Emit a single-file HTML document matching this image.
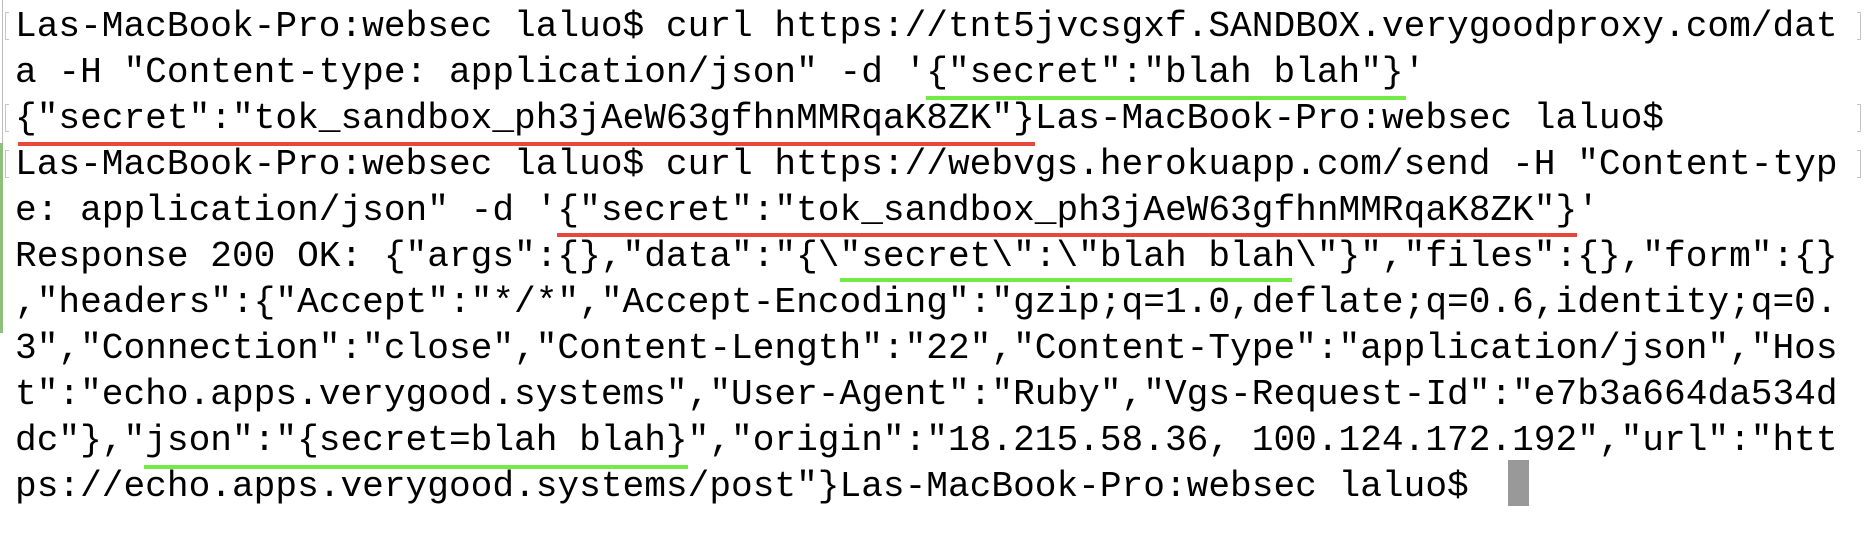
<!DOCTYPE html>
<html><head><meta charset="utf-8"><style>
html,body{margin:0;padding:0;background:#fff;width:1866px;height:534px;overflow:hidden;position:relative}
.l{position:absolute;left:15px;white-space:pre;font-family:"Liberation Mono",monospace;font-size:36.17px;line-height:46px;height:46px;color:#000}
.u{position:absolute;height:4px}
.g{background:#74ea47}.r{background:#e8473c}
.b{position:absolute;width:3px;height:26px;border:1.5px solid #c4c4c4}
.bl{border-right:none}.br{border-left:none}
</style></head><body>
<div style="position:absolute;left:2px;top:0;width:1px;height:143px;background:#bbb"></div>
<div style="position:absolute;left:0;top:143px;width:3px;height:190px;background:#8fbf7a"></div>
<div class="l" style="top:4px">Las-MacBook-Pro:websec laluo$ curl https://tnt5jvcsgxf.SANDBOX.verygoodproxy.com/dat</div>
<div class="l" style="top:50px">a -H "Content-type: application/json" -d '{"secret":"blah blah"}'</div>
<div class="l" style="top:96px">{"secret":"tok_sandbox_ph3jAeW63gfhnMMRqaK8ZK"}Las-MacBook-Pro:websec laluo$</div>
<div class="l" style="top:142px">Las-MacBook-Pro:websec laluo$ curl https://webvgs.herokuapp.com/send -H "Content-typ</div>
<div class="l" style="top:188px">e: application/json" -d '{"secret":"tok_sandbox_ph3jAeW63gfhnMMRqaK8ZK"}'</div>
<div class="l" style="top:234px">Response 200 OK: {"args":{},"data":"{\"secret\":\"blah blah\"}","files":{},"form":{}</div>
<div class="l" style="top:280px">,"headers":{"Accept":"*/*","Accept-Encoding":"gzip;q=1.0,deflate;q=0.6,identity;q=0.</div>
<div class="l" style="top:326px">3","Connection":"close","Content-Length":"22","Content-Type":"application/json","Hos</div>
<div class="l" style="top:372px">t":"echo.apps.verygood.systems","User-Agent":"Ruby","Vgs-Request-Id":"e7b3a664da534d</div>
<div class="l" style="top:418px">dc"},"json":"{secret=blah blah}","origin":"18.215.58.36, 100.124.172.192","url":"htt</div>
<div class="l" style="top:464px">ps://echo.apps.verygood.systems/post"}Las-MacBook-Pro:websec laluo$ </div>
<div style="position:absolute;left:1508px;top:460px;width:21px;height:46px;background:#999"></div>
<div class="u g" style="left:926px;top:96px;width:480px"></div>
<div class="u r" style="left:18px;top:142px;width:1017px"></div>
<div class="u r" style="left:557px;top:233px;width:1020px"></div>
<div class="u g" style="left:840px;top:278px;width:452px"></div>
<div class="u g" style="left:144px;top:465px;width:544px"></div>
<div class="b bl" style="left:5px;top:12px"></div>
<div class="b bl" style="left:5px;top:104px"></div>
<div class="b bl" style="left:5px;top:150px"></div>
<div class="b br" style="left:1857px;top:12px"></div>
<div class="b br" style="left:1857px;top:104px"></div>
<div class="b br" style="left:1857px;top:150px"></div>
</body></html>
